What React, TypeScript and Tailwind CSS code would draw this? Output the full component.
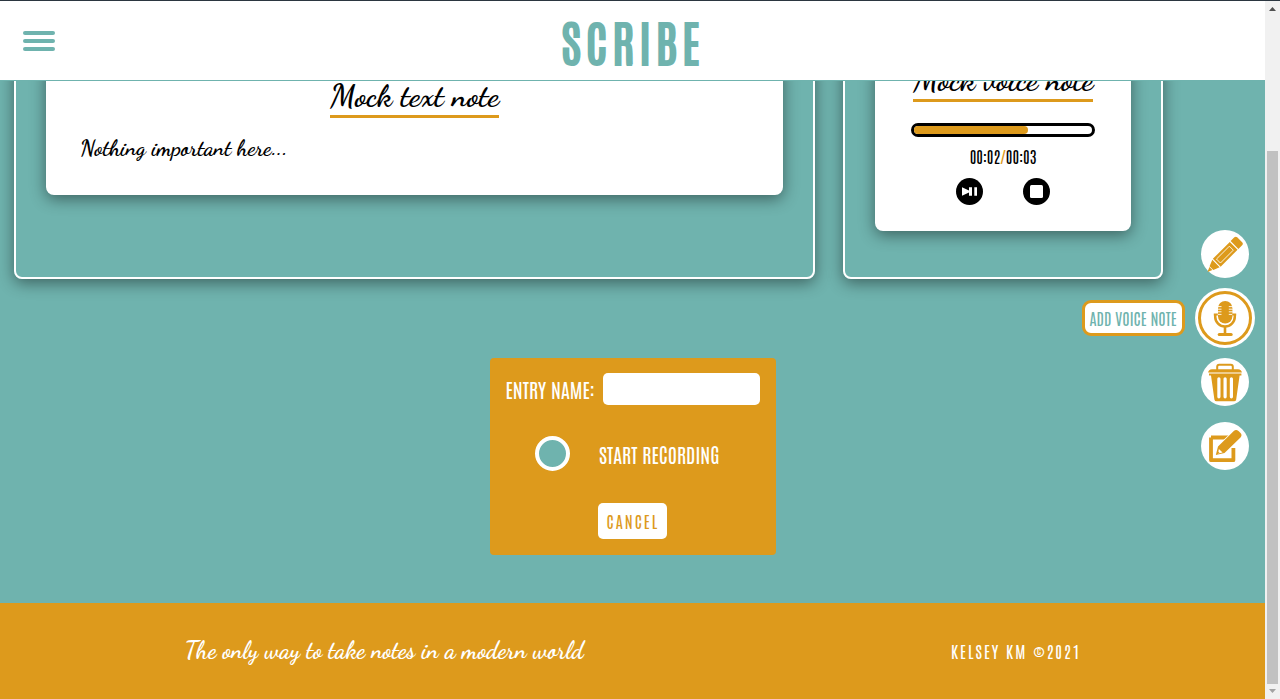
const SANS = "font-[Antonio,Roboto,sans-serif] whitespace-nowrap leading-none";
const SCRIPT = "font-['Dancing_Script','Liberation_Serif',serif] whitespace-nowrap leading-none";

function Header() {
  return (
    <header className="flex h-20 shrink-0 items-center border-b border-[#6fb3ae] bg-white">
      <button aria-label="Menu" className="ml-[23px] flex w-8 flex-col gap-1">
        <span className="h-1 rounded-full bg-[#6fb3ae]" />
        <span className="h-1 rounded-full bg-[#6fb3ae]" />
        <span className="h-1 rounded-full bg-[#6fb3ae]" />
      </button>
      <h1 className={`${SANS} mt-px ml-[506.5px] text-[48px] font-normal tracking-[4.9px] text-[#6fb3ae] [-webkit-text-stroke:1.8px_#6fb3ae]`}>SCRIBE</h1>
    </header>
  );
}

function TextPanel() {
  return (
    <section className="h-[218px] w-[801px] rounded-lg border-2 border-white px-[30px] shadow-[0_4px_16px_rgba(0,0,0,0.45)]">
      <article className="flex h-[132px] w-[737px] flex-col items-center rounded-lg bg-white pt-[17px] shadow-[0_4px_16px_rgba(0,0,0,0.45)]">
        <h2 className={`${SCRIPT} h-[38px] w-[169px] border-b-[3px] border-[#dd9a1c] text-[32px] font-bold`}>Mock text note</h2>
        <p className={`${SCRIPT} mt-[19px] w-full pl-[34px] text-[22.4px] font-bold`}>Nothing important here...</p>
      </article>
    </section>
  );
}

function VoicePanel() {
  return (
    <section className="h-[218px] w-[320px] rounded-lg border-2 border-white px-[30px] shadow-[0_4px_16px_rgba(0,0,0,0.45)]">
      <article className="flex h-[168px] w-64 flex-col items-center rounded-lg bg-white pt-px shadow-[0_4px_16px_rgba(0,0,0,0.45)]">
        <h2 className={`${SCRIPT} h-[38px] w-[180px] border-b-[3px] border-[#dd9a1c] text-[32px] font-bold`}>Mock voice note</h2>
        <div className="mt-[21px] h-[14px] w-[184px] shrink-0 rounded-full border-[3px] border-black bg-white">
          <div className="h-2 w-[114px] rounded-full bg-[#dd9a1c]" />
        </div>
        <p className={`${SANS} mt-[11px] h-4 text-[16px]`}>
          00:02<span className="text-[#dd9a1c]">/</span>00:03
        </p>
        <div className="mt-[14px] flex gap-10">
          <svg width="27" height="27" viewBox="0 0 27 27">
            <circle cx="13.5" cy="13.5" r="13.5" />
            <path d="M6 9.2v8.6l7-3.4v3.4h3V9.2h-3v3.4zM18.3 9.2h2.7v8.6h-2.7z" fill="#fff" />
          </svg>
          <svg width="27" height="27" viewBox="0 0 27 27">
            <circle cx="13.5" cy="13.5" r="13.5" />
            <rect x="7" y="7" width="13" height="13" rx="1.5" fill="#fff" />
          </svg>
        </div>
      </article>
    </section>
  );
}

function RecordForm() {
  return (
    <form className="mx-auto mt-[79px] flex h-[197px] w-[286px] flex-col items-center rounded bg-[#dd9a1c] pt-[15px] text-white">
      <label className="flex h-8 w-full items-center pl-4">
        <span className={`${SANS} w-[97px] text-[20px]`}>ENTRY NAME:</span>
        <input className="h-8 w-[157px] rounded-[5px] bg-white" />
      </label>
      <div className="mt-[31px] flex w-full items-center pl-[45px]">
        <button type="button" aria-label="Record" className="size-[35px] rounded-full border-4 border-white bg-[#6fb3ae]" />
        <span className={`${SANS} ml-[29.5px] text-[20px]`}>START RECORDING</span>
      </div>
      <button type="button" className={`${SANS} mt-8 h-9 w-[69px] rounded-[5px] bg-white pl-[8.5px] text-left text-[16px] tracking-[2px] text-[#dd9a1c]`}>
        CANCEL
      </button>
    </form>
  );
}

function Tools() {
  return (
    <nav className="absolute right-[10px] top-[149px] flex flex-col items-end text-[#dd9a1c]">
      <button aria-label="Add text note" className="mr-1.5 size-12 rounded-full bg-white">
        <svg viewBox="0 0 48 48" fill="currentColor">
          <g transform="translate(6.5 42) rotate(-45)">
            <path d="M0 0 4.8-2.1v4.2zM5.6-2.7 12-5.2V5.2L5.6 2.7zM13.1-5.5H37v11H13.1zM38.2-5.5h5.3a2 2 0 0 1 2 2v7a2 2 0 0 1-2 2h-5.3z" />
            <path d="M15.5-2.8h18.2v5.6H15.5z" fill="none" stroke="#fff" strokeWidth=".8" />
          </g>
        </svg>
      </button>
      <div className="mt-[10px] flex items-center">
        <span className={`${SANS} mr-[10.5px] flex h-9 w-[103px] items-center rounded-[9px] border-[3px] border-[#dd9a1c] bg-white pl-[5px] text-[16px] text-[#6fb3ae]`}>
          ADD VOICE NOTE
        </span>
        <button aria-label="Add voice note" className="size-[60px] rounded-full bg-white">
          <svg viewBox="0 0 60 60" fill="none" stroke="currentColor">
            <circle cx="30" cy="30" r="25.5" strokeWidth="3" />
            <rect x="23" y="13" width="14.4" height="22.5" rx="7.2" fill="currentColor" stroke="none" />
            <path d="M22.5 18.6h4M22.5 21.2h4M22.5 23.8h4M22.5 26.4h4M33.8 18.6h4M33.8 21.2h4M33.8 23.8h4M33.8 26.4h4" stroke="#fff" strokeWidth=".9" />
            <path d="M20.2 26.5v2.2a9.8 9.8 0 0 0 19.6 0v-2.2" strokeWidth="2.5" />
            <path d="M18.8 26.5h4M37.2 26.5h4" strokeWidth="2.2" />
            <path d="M30 38v8" strokeWidth="2.6" />
            <path d="M24.2 46.5h12" strokeWidth="3" strokeLinecap="round" />
          </svg>
        </button>
      </div>
      <button aria-label="Delete note" className="mr-1.5 mt-[10px] size-12 rounded-full bg-white">
        <svg viewBox="0 0 48 48" fill="currentColor">
          <path d="M16.2 12V8.8q0-2 2-2h11.6q2 0 2 2V12" fill="none" stroke="currentColor" strokeWidth="2" />
          <path d="M11 11.2h26q3.5.4 3.9 3.3H7.1q.4-2.9 3.9-3.3zM8 15.5h32.4v2H38.6l-3.4 23.9q-.3 1.9-2.2 1.9H15.6q-1.9 0-2.2-1.9L10 17.5H8z" />
          <path d="M17.9 20.8v18M24.1 20.8v18M30.4 20.8v18" stroke="#fff" strokeWidth="3.2" strokeLinecap="round" />
        </svg>
      </button>
      <button aria-label="Edit note" className="mr-1.5 mt-4 size-12 rounded-full bg-white">
        <svg viewBox="0 0 48 48" fill="currentColor">
          <path d="M10 15.5h21M10 15.5v22.7h22.4V26" fill="none" stroke="currentColor" strokeWidth="3.8" strokeLinejoin="round" />
          <path d="M14.8 33 17 24.5 32.8 9q2.2-2.2 4.7 0l2 2q2 2.1 0 4.4L23.5 31z" stroke="#fff" strokeWidth="1.6" paintOrder="stroke" />
          <path d="m17.9 27 3.7 3.6-4.6.8z" fill="#fff" />
          <path d="m16.5 29 2.1 2-2.7.8z" />
        </svg>
      </button>
    </nav>
  );
}

function Footer() {
  return (
    <footer className="flex h-24 shrink-0 items-center bg-[#dd9a1c] text-white">
      <p className={`${SCRIPT} -mt-px w-[766px] pl-[184.5px] text-[24px] font-bold`}>The only way to take notes in a modern world</p>
      <p className={`${SANS} ml-[185px] text-[16px] tracking-[2px]`}>KELSEY KM ©2021</p>
    </footer>
  );
}

function Scrollbar() {
  return (
    <aside className="flex w-[15px] shrink-0 flex-col items-center bg-[#f1f1f1]">
      <svg className="mt-1.5 shrink-0" width="7" height="4" viewBox="0 0 7 4"><path d="M0 4 3.5 0 7 4z" fill="#505050" /></svg>
      <div className="mt-[140px] h-[533px] w-[11px] shrink-0 bg-[#c1c1c1]" />
      <svg className="mt-[5px] shrink-0" width="7" height="4" viewBox="0 0 7 4"><path d="M0 0h7L3.5 4z" fill="#a3a3a3" /></svg>
    </aside>
  );
}

export default function App() {
  return (
    <div className="flex h-[699px] w-[1280px] overflow-hidden border-t border-[#2b3640] text-black">
      <div className="flex min-w-0 flex-1 flex-col">
        <Header />
        <main className="relative h-[522px] shrink-0 overflow-hidden bg-[#6fb3ae]">
          <div className="-mt-5 flex gap-7 pl-[14px]">
            <TextPanel />
            <VoicePanel />
          </div>
          <RecordForm />
          <Tools />
        </main>
        <Footer />
      </div>
      <Scrollbar />
    </div>
  );
}
